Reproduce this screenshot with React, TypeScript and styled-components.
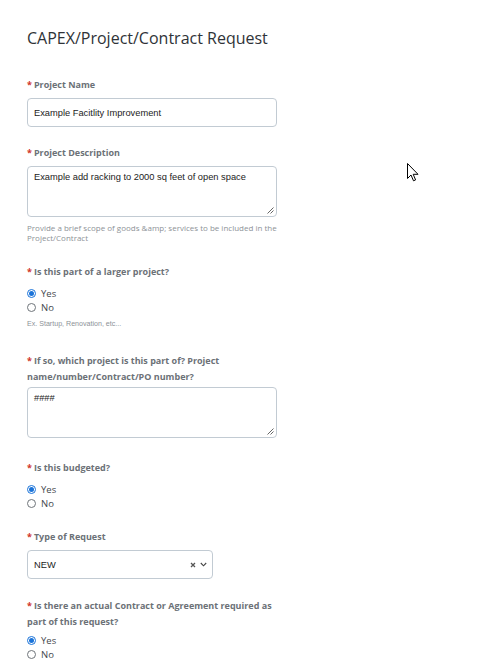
import React from "react";
import styled, { createGlobalStyle } from "styled-components";

const GlobalStyle = createGlobalStyle`
  html, body {
    margin: 0;
    padding: 0;
    background: #ffffff;
  }
  body {
    font-family: "Open Sans", "Liberation Sans", sans-serif;
  }
`;

const Page = styled.div`
  position: relative;
  width: 490px;
  height: 672px;
  overflow: hidden;
  padding: 27px 0 0 27px;
  box-sizing: border-box;
`;

const Form = styled.div`
  width: 250px;
  display: flex;
  flex-direction: column;
`;

const Title = styled.h1`
  margin: 0 0 28px;
  font-size: 16px;
  font-weight: 500;
  color: #2f3338;
  line-height: 22px;
  white-space: nowrap;
`;

const Field = styled.div<{ $gap?: number }>`
  display: flex;
  flex-direction: column;
  margin-bottom: ${(p) => p.$gap ?? 0}px;
`;

const Label = styled.div<{ $multi?: boolean }>`
  font-size: 9px;
  font-weight: 700;
  color: #6c7177;
  line-height: 16px;
  margin-bottom: ${(p) => (p.$multi ? 2 : 5)}px;
  padding-right: 4px;
`;

const Star = styled.span`
  color: #d0342c;
  margin-right: 2px;
`;

const TextInput = styled.div`
  height: 29px;
  box-sizing: border-box;
  border: 1px solid #c2cbd3;
  border-radius: 4px;
  padding: 0 6px;
  display: flex;
  align-items: center;
  font-family: "Liberation Sans", Arial, sans-serif;
  font-size: 9.3px;
  color: #222;
`;

const TextArea = styled.div`
  position: relative;
  height: 51px;
  box-sizing: border-box;
  border: 1px solid #c2cbd3;
  border-radius: 4px;
  padding: 4px 6px;
  font-family: "Liberation Sans", Arial, sans-serif;
  font-size: 9.3px;
  color: #222;
  line-height: 12px;
`;

const Grip = styled.svg`
  position: absolute;
  right: 2px;
  bottom: 2px;
`;

const Help = styled.div<{ $small?: boolean }>`
  margin-top: 6px;
  font-family: ${(p) =>
    p.$small ? '"Liberation Sans", Arial, sans-serif' : '"Open Sans", sans-serif'};
  font-size: ${(p) => (p.$small ? 7.1 : 8)}px;
  color: #8d9297;
  line-height: 10px;
  white-space: ${(p) => (p.$small ? "nowrap" : "normal")};
`;

const Options = styled.div`
  display: flex;
  flex-direction: column;
  gap: 2px;
  margin-top: 2px;
`;

const Option = styled.label`
  display: flex;
  align-items: center;
  gap: 5px;
  height: 12px;
  font-size: 9.5px;
  font-weight: 500;
  color: #44484d;
`;

const Dot = styled.span<{ $on?: boolean }>`
  width: 9px;
  height: 9px;
  box-sizing: border-box;
  border-radius: 50%;
  border: 1px solid ${(p) => (p.$on ? "#1a73d9" : "#6f757a")};
  display: flex;
  align-items: center;
  justify-content: center;
  &::after {
    content: "";
    width: 5px;
    height: 5px;
    border-radius: 50%;
    background: ${(p) => (p.$on ? "#1a73d9" : "transparent")};
  }
`;

const Select = styled.div`
  width: 186px;
  height: 29px;
  box-sizing: border-box;
  border: 1px solid #c2cbd3;
  border-radius: 4px;
  padding: 0 5px 0 6px;
  display: flex;
  align-items: center;
  font-family: "Liberation Sans", Arial, sans-serif;
  font-size: 9.3px;
  color: #222;
`;

const SelectValue = styled.span`
  flex: 1;
`;

const SelectIcons = styled.span`
  display: flex;
  align-items: center;
  gap: 4px;
`;

const Cursor = styled.svg`
  position: absolute;
  left: 407px;
  top: 163px;
`;

function ResizeGrip() {
  return (
    <Grip width="7" height="7" viewBox="0 0 7 7">
      <path d="M6.5 0.5 L0.5 6.5 M6.5 3.5 L3.5 6.5" stroke="#666" strokeWidth="1" />
    </Grip>
  );
}

function Radio({ options, value }: { options: string[]; value: string }) {
  return (
    <Options>
      {options.map((o) => (
        <Option key={o}>
          <Dot $on={o === value} />
          {o}
        </Option>
      ))}
    </Options>
  );
}

function Req({ children, multi }: { children: React.ReactNode; multi?: boolean }) {
  return (
    <Label $multi={multi}>
      <Star>*</Star>
      {children}
    </Label>
  );
}

export default function App() {
  return (
    <Page>
      <GlobalStyle />
      <Form>
        <Title>CAPEX/Project/Contract Request</Title>

        <Field $gap={18}>
          <Req>Project Name</Req>
          <TextInput>Example Facitlity Improvement</TextInput>
        </Field>

        <Field $gap={21}>
          <Req>Project Description</Req>
          <TextArea>
            Example add racking to 2000 sq feet of open space
            <ResizeGrip />
          </TextArea>
          <Help>
            Provide a brief scope of goods &amp;amp; services to be included in the
            Project/Contract
          </Help>
        </Field>

        <Field $gap={24}>
          <Req>Is this part of a larger project?</Req>
          <Radio options={["Yes", "No"]} value="Yes" />
          <Help $small>Ex. Startup, Renovation, etc...</Help>
        </Field>

        <Field $gap={22}>
          <Req multi>If so, which project is this part of? Project name/number/Contract/PO number?</Req>
          <TextArea>
            ####
            <ResizeGrip />
          </TextArea>
        </Field>

        <Field $gap={20}>
          <Req>Is this budgeted?</Req>
          <Radio options={["Yes", "No"]} value="Yes" />
        </Field>

        <Field $gap={19}>
          <Req>Type of Request</Req>
          <Select>
            <SelectValue>NEW</SelectValue>
            <SelectIcons>
              <svg width="6" height="6" viewBox="0 0 6 6">
                <path d="M1 1 L5 5 M5 1 L1 5" stroke="#555" strokeWidth="1.3" />
              </svg>
              <svg width="7" height="5" viewBox="0 0 7 5">
                <path d="M0.8 1 L3.5 3.8 L6.2 1" stroke="#444" strokeWidth="1.1" fill="none" />
              </svg>
            </SelectIcons>
          </Select>
        </Field>

        <Field>
          <Req multi>Is there an actual Contract or Agreement required as part of this request?</Req>
          <Radio options={["Yes", "No"]} value="Yes" />
        </Field>
      </Form>
      <Cursor width="12" height="19" viewBox="0 0 12 19">
        <path
          d="M0.5 0.5 L0.5 15.5 L4 12 L6.5 17.8 L8.6 16.9 L6.2 11.3 L11 11.3 Z"
          fill="#fff"
          stroke="#000"
          strokeWidth="1"
        />
      </Cursor>
    </Page>
  );
}
